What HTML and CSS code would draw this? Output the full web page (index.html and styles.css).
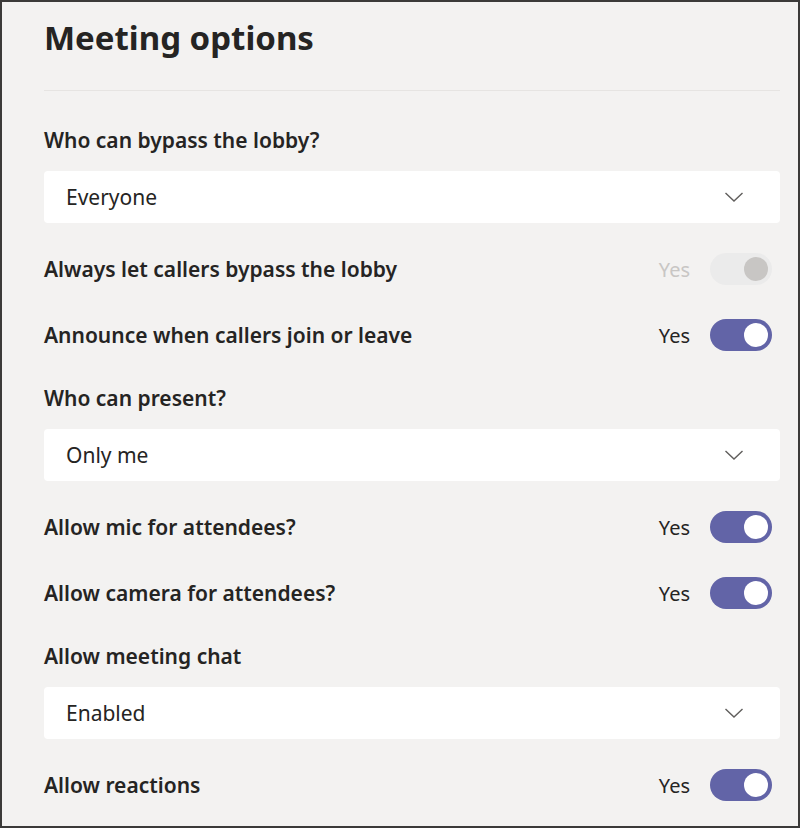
FILE: index.html
```html
<!DOCTYPE html>
<html lang="en">
<head>
    <meta charset="UTF-8">
    <meta name="viewport" content="width=device-width, initial-scale=1.0">
    <title>Meeting options</title>
    <link rel="stylesheet" href="styles.css">
</head>
<body>
    <div class="frame">
        <h1 class="title">Meeting options</h1>
        <div class="divider"></div>

        <div class="options">
            <div class="label">Who can bypass the lobby?</div>
            <div class="select">
                <span>Everyone</span>
                <svg class="chevron" width="20" height="12" viewBox="0 0 20 12"><path d="M1.5 2 L10 10 L18.5 2" fill="none" stroke="#605e5c" stroke-width="1.4"/></svg>
            </div>

            <div class="toggle-row disabled">
                <span class="row-text">Always let callers bypass the lobby</span>
                <span class="yes">Yes</span>
                <span class="toggle off"><span class="knob"></span></span>
            </div>
            <div class="toggle-row">
                <span class="row-text">Announce when callers join or leave</span>
                <span class="yes">Yes</span>
                <span class="toggle"><span class="knob"></span></span>
            </div>

            <div class="label">Who can present?</div>
            <div class="select">
                <span>Only me</span>
                <svg class="chevron" width="20" height="12" viewBox="0 0 20 12"><path d="M1.5 2 L10 10 L18.5 2" fill="none" stroke="#605e5c" stroke-width="1.4"/></svg>
            </div>

            <div class="toggle-row">
                <span class="row-text">Allow mic for attendees?</span>
                <span class="yes">Yes</span>
                <span class="toggle"><span class="knob"></span></span>
            </div>
            <div class="toggle-row">
                <span class="row-text">Allow camera for attendees?</span>
                <span class="yes">Yes</span>
                <span class="toggle"><span class="knob"></span></span>
            </div>

            <div class="label">Allow meeting chat</div>
            <div class="select">
                <span>Enabled</span>
                <svg class="chevron" width="20" height="12" viewBox="0 0 20 12"><path d="M1.5 2 L10 10 L18.5 2" fill="none" stroke="#605e5c" stroke-width="1.4"/></svg>
            </div>

            <div class="toggle-row">
                <span class="row-text">Allow reactions</span>
                <span class="yes">Yes</span>
                <span class="toggle"><span class="knob"></span></span>
            </div>
        </div>
    </div>
</body>
</html>
```

FILE: styles.css
```css
body {
    margin: 0;
    font-family: "Noto Sans", "Open Sans", sans-serif;
    color: #252423;
}

.frame {
    box-sizing: border-box;
    height: 828px;
    border: 2px solid #3b3a39;
    background-color: #f3f2f1;
    padding: 0 18px 0 42px;
    overflow: hidden;
}

.title {
    margin: 14px 0 0 0;
    font-size: 33px;
    line-height: 44px;
    font-weight: 700;
}

.divider {
    height: 1px;
    background-color: #e6e4e2;
    margin-top: 30px;
}

.options {
    display: flex;
    flex-direction: column;
}

.label {
    font-size: 21px;
    font-weight: 600;
    line-height: 28px;
    margin-bottom: 17px;
}

.divider + .options .label:first-child {
    margin-top: 35px;
}

.select {
    height: 52px;
    background-color: #fff;
    border-radius: 4px;
    display: flex;
    align-items: center;
    justify-content: space-between;
    padding: 0 36px 0 22px;
    font-size: 21px;
}

.toggle-row {
    height: 32px;
    display: flex;
    align-items: center;
    margin-top: 30px;
    font-size: 21px;
}

.toggle-row + .toggle-row {
    margin-top: 34px;
}

.toggle-row + .label {
    margin-top: 33px;
}

.row-text {
    flex: 1;
    font-weight: 600;
}

.yes {
    font-size: 20px;
    margin-right: 20px;
}

.disabled .yes {
    color: #c8c6c4;
}

.toggle {
    width: 62px;
    height: 32px;
    border-radius: 16px;
    background-color: #6264a7;
    position: relative;
    margin-right: 8px;
}

.knob {
    position: absolute;
    right: 4px;
    top: 4px;
    width: 24px;
    height: 24px;
    border-radius: 50%;
    background-color: #fff;
}

.toggle.off {
    background-color: #ebebeb;
}

.toggle.off .knob {
    background-color: #c8c6c4;
}
```
